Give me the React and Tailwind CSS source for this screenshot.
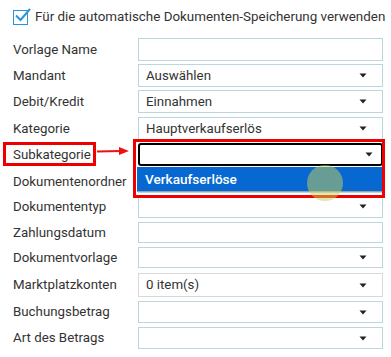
import { useState } from 'react'

const rows = [
  { label: 'Vorlage Name', mt: 'mt-0', h: 'h-[23px]', arrow: false },
  { label: 'Mandant', mt: 'mt-[3px]', h: 'h-[23px]', value: 'Auswählen', arrow: true },
  { label: 'Debit/Kredit', mt: 'mt-[3px]', h: 'h-[23px]', value: 'Einnahmen', arrow: true },
  { label: 'Kategorie', mt: 'mt-[4px]', h: 'h-[23px]', value: 'Hauptverkaufserlös', arrow: true },
  { label: 'Subkategorie', mt: 'mt-[3px]', h: 'h-[23px]', sub: true },
  { label: 'Dokumentenordner', mt: 'mt-[4px]', h: 'h-[23px]', arrow: true },
  { label: 'Dokumententyp', mt: 'mt-[2px]', h: 'h-[23px]', arrow: true },
  { label: 'Zahlungsdatum', mt: 'mt-[4px]', h: 'h-[21px]', arrow: false },
  { label: 'Dokumentvorlage', mt: 'mt-[4px]', h: 'h-[21px]', arrow: true },
  { label: 'Marktplatzkonten', mt: 'mt-[5px]', h: 'h-[24px]', value: '0 item(s)', arrow: true, gray: true },
  { label: 'Buchungsbetrag', mt: 'mt-[4px]', h: 'h-[22px]', arrow: true },
  { label: 'Art des Betrags', mt: 'mt-[4px]', h: 'h-[22px]', arrow: true },
]

function Caret() {
  return (
    <svg width="8" height="5" viewBox="0 0 8 5" className="shrink-0">
      <path d="M0.5 0.5 L7.5 0.5 L4 4.5 Z" fill="#222" />
    </svg>
  )
}

export default function App() {
  const [checked, setChecked] = useState(true)

  return (
    <div className="relative w-[391px] h-[357px] overflow-hidden bg-white text-[13.3px] text-[#333] font-['Roboto',sans-serif]">
      {/* Checkbox */}
      <label className="flex items-center h-[38px] pl-[13px] pb-[3px] cursor-pointer whitespace-nowrap">
        <span
          onClick={() => setChecked(!checked)}
          className="relative w-[15px] h-[15px] border-[1.5px] border-[#2a93dd] bg-white shrink-0"
        >
          {checked && (
            <svg width="18" height="16" viewBox="0 0 18 16" className="absolute left-[0px] top-[-4px]">
              <path d="M2 8.5 L6.5 13 L16 2" fill="none" stroke="#2a93dd" strokeWidth="2" />
            </svg>
          )}
        </span>
        <span className="ml-[7px] text-[13.4px] text-[#333]">Für die automatische Dokumenten-Speicherung verwenden</span>
      </label>

      {/* Formular */}
      <div className="flex flex-col">
        {rows.map((r) => (
          <div key={r.label} className={`flex items-center ${r.mt} ${r.h}`}>
            <div className="w-[138px] pl-[13px] shrink-0 whitespace-nowrap">{r.label}</div>
            {r.sub ? (
              <div className="relative flex items-center w-[245px] h-full border-2 border-black rounded-[3px] px-[8px] justify-end">
                <Caret />
              </div>
            ) : (
              <div
                className={`flex items-center w-[245px] h-full border ${r.gray ? 'border-[#d9d9d9]' : 'border-[#bcd6de]'} px-[7px]`}
              >
                <span className="flex-1 truncate">{r.value}</span>
                {r.arrow && <span className="mr-[8px]"><Caret /></span>}
              </div>
            )}
          </div>
        ))}
      </div>

      {/* Dropdown-Liste */}
      <div className="absolute left-[137px] top-[167px] w-[245px] h-[25px] bg-[#0668d0] border-b border-[#9aa3ad] flex items-center pl-[8px] text-white font-medium text-[13.6px]">
        Verkaufserlöse
      </div>

      {/* Markierungen */}
      <div className="absolute left-[3px] top-[142px] w-[93px] h-[24px] border-[3px] border-[#ee0000]" />
      <div className="absolute left-[133px] top-[139px] w-[252px] h-[59px] border-[3px] border-[#ee0000]" />
      <svg className="absolute left-[96px] top-[146px]" width="36" height="11" viewBox="0 0 36 11">
        <path d="M1 5.5 L25 5" stroke="#ee1111" strokeWidth="2" />
        <path d="M23 1 L33 5 L23 9 Z" fill="#ee1111" />
      </svg>

      {/* Cursor */}
      <div className="absolute left-[307px] top-[165px] w-[36px] h-[36px] rounded-full bg-[rgba(200,210,90,0.5)]" />
    </div>
  )
}
